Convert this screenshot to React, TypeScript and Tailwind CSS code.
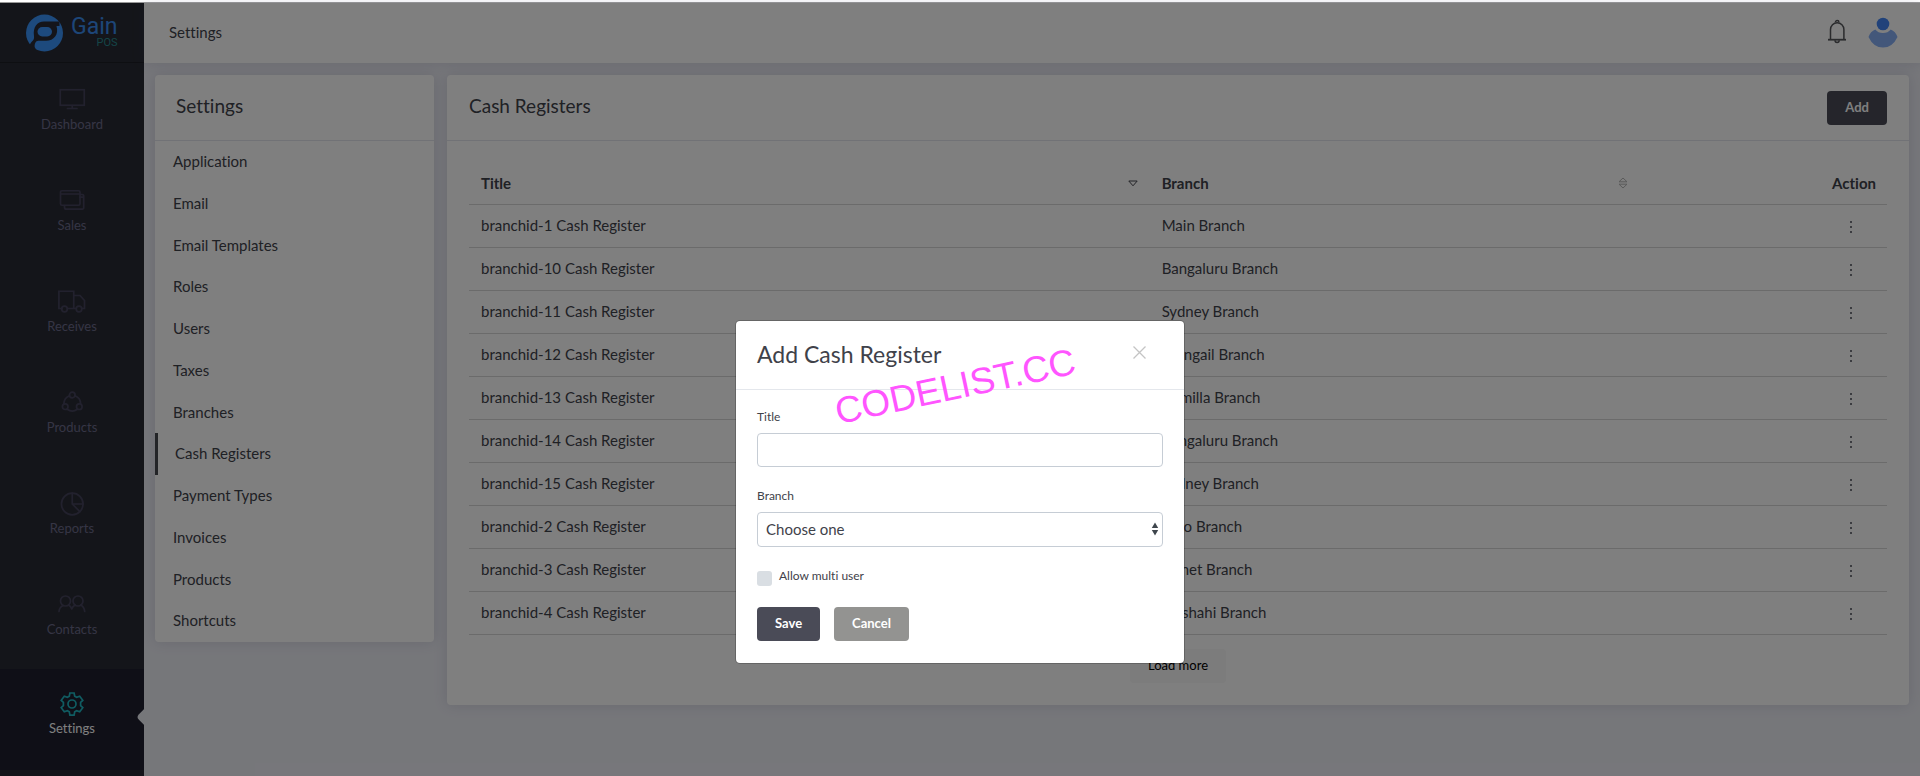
import type { ReactNode } from "react";

const stroke = {
  fill: "none",
  stroke: "currentColor",
  strokeWidth: 1.7,
  strokeLinecap: "round" as const,
  strokeLinejoin: "round" as const,
};

function DashboardIcon() {
  return (
    <svg viewBox="0 0 28 24" className="h-6 w-7" {...stroke} strokeLinejoin="miter" aria-hidden="true">
      <rect x="2.25" y="1.75" width="24" height="15.5" />
      <path d="M14.25 17.5v3M9.5 20.5h9.5" />
    </svg>
  );
}

function SalesIcon() {
  return (
    <svg viewBox="0 0 28 24" className="h-6 w-7" {...stroke} aria-hidden="true">
      <rect x="2.5" y="1.75" width="19.5" height="14.5" rx="1.5" />
      <path d="M3 5h18.5M22 5.5h2.2a1.5 1.5 0 0 1 1.5 1.5v11.7a1.5 1.5 0 0 1-1.5 1.5H8.5a2 2 0 0 1-2-2v-1.5M22 8.2h3.5" />
    </svg>
  );
}

function ReceivesIcon() {
  return (
    <svg viewBox="0 0 28 24" className="h-6 w-7" {...stroke} strokeLinejoin="miter" aria-hidden="true">
      <path d="M4 18.5H.9V1.25h14.85v17.25M9.5 18.5h8.5M16 5.5h6l4.5 5v8h-2.5" />
      <circle cx="6.5" cy="19" r="2.8" />
      <circle cx="21" cy="19" r="2.8" />
    </svg>
  );
}

function ProductsIcon() {
  return (
    <svg viewBox="0 0 28 24" className="h-6 w-7" {...stroke} aria-hidden="true">
      <circle cx="14.25" cy="4" r="2.8" />
      <circle cx="7.2" cy="15.7" r="2.8" />
      <circle cx="21.3" cy="15.7" r="2.8" />
      <path d="M11.5 4.8a8.800 8.800 0 0 0-5.600 8M17 4.8a8.800 8.800 0 0 1 5.600 8M9.200 18.200a8.500 8.500 0 0 0 10.100 0" />
    </svg>
  );
}

function ReportsIcon() {
  return (
    <svg viewBox="0 0 28 24" className="h-6 w-7" {...stroke} aria-hidden="true">
      <circle cx="14.25" cy="12" r="10.8" />
      <path d="M14.25 1.2V12h10.800M14.25 12l7.600 7.600" />
    </svg>
  );
}

function ContactsIcon() {
  return (
    <svg viewBox="0 0 28 24" className="h-6 w-7" {...stroke} aria-hidden="true">
      <circle cx="7.5" cy="8" r="5" />
      <circle cx="20" cy="8" r="5" />
      <path d="M1 18.500c.3-3 2-5 4-6M10.500 12c1.500.8 2.700 2.200 3.300 4 .6-1.800 1.800-3.200 3.300-4M22.800 12c2 1 3.500 3.200 3.900 6.500" />
    </svg>
  );
}

function SettingsIcon() {
  return (
    <svg viewBox="0 0 24 24" className="h-6 w-7" {...stroke} strokeLinejoin="miter" aria-hidden="true">
      <path d="M9.900 1h4.200l.6 3.200 1.900 1.100 3.100-1.100 3.100 4.100-2.200 2.100v3.200l2.200 2.100-3.100 4.100-3.100-1.100-1.900 1.100-.6 3.300H9.900l-.6-3.300-1.900-1.100-3.100 1.100-3.100-4.100 2.200-2.100v-3.200L1.200 8.300l3.100-4.100 3.100 1.100 1.900-1.100z" />
      <circle cx="12" cy="12" r="4" />
    </svg>
  );
}

function Logo() {
  return (
    <svg viewBox="0 0 37 38" className="h-[38px] w-[37px]" aria-hidden="true">
      <circle cx="18.500" cy="19" r="18.500" fill="#3a94fb" />
      <path
        d="M3.500 31.500C5.500 26 8.500 27.500 8 22 6.800 13 11 7.500 18 7.500H33.500V12h-3c2.500 8.500-2.500 14.800-10.500 14.800h-6.500c-3.500 0-4.200 1.500-4.800 4.200-.3 1.600.2 3 1.300 4.300L7.500 36z"
        fill="#292b34"
      />
      <rect x="11.500" y="13" width="14.500" height="9.500" rx="4.750" fill="#3a94fb" />
    </svg>
  );
}

function SortIcon() {
  return (
    <svg viewBox="0 0 10 12" className="h-3 w-[10px] text-[#b5b5b5]" fill="none" stroke="currentColor" aria-hidden="true">
      <path d="M1 4.800h8L5 1zM1 7.200h8L5 11z" />
    </svg>
  );
}

function SortDownIcon() {
  return (
    <svg viewBox="0 0 10 12" className="h-3 w-[10px] text-[#44464e]" fill="none" stroke="currentColor" aria-hidden="true">
      <path d="M.8 4h8.400L5 8.800z" />
    </svg>
  );
}

const navItems: { label: string; icon: ReactNode; active?: boolean }[] = [
  { label: "Dashboard", icon: <DashboardIcon /> },
  { label: "Sales", icon: <SalesIcon /> },
  { label: "Receives", icon: <ReceivesIcon /> },
  { label: "Products", icon: <ProductsIcon /> },
  { label: "Reports", icon: <ReportsIcon /> },
  { label: "Contacts", icon: <ContactsIcon /> },
  { label: "Settings", icon: <SettingsIcon />, active: true },
];

const settingsItems = [
  "Application",
  "Email",
  "Email Templates",
  "Roles",
  "Users",
  "Taxes",
  "Branches",
  "Cash Registers",
  "Payment Types",
  "Invoices",
  "Products",
  "Shortcuts",
];

const registers = [
  ["branchid-1 Cash Register", "Main Branch"],
  ["branchid-10 Cash Register", "Bangaluru Branch"],
  ["branchid-11 Cash Register", "Sydney Branch"],
  ["branchid-12 Cash Register", "Mungail Branch"],
  ["branchid-13 Cash Register", "Cumilla Branch"],
  ["branchid-14 Cash Register", "Bangaluru Branch"],
  ["branchid-15 Cash Register", "Sydney Branch"],
  ["branchid-2 Cash Register", "Oslo Branch"],
  ["branchid-3 Cash Register", "Sylhet Branch"],
  ["branchid-4 Cash Register", "Rajshahi Branch"],
];

function Sidebar() {
  return (
    <aside className="w-36 shrink-0 bg-[#292b34]">
      <a href="#home" className="flex h-[60px] items-center gap-2 border-b border-[#1d1e25] pl-[26px]">
        <Logo />
        <span className="flex flex-col items-end font-[Roboto,sans-serif]">
          <span className="text-[23px] leading-5 text-[#3a8df0]">Gain</span>
          <span className="text-[11px] leading-3 text-[#2a8a90]">POS</span>
        </span>
      </a>
      <nav>
        {navItems.map((item) => (
          <a
            key={item.label}
            href={"#" + item.label.toLowerCase()}
            className={
              item.active
                ? "relative flex h-[101px] flex-col items-center gap-1 overflow-hidden bg-[#1e1e2f] pt-[23px] text-[#20b9c4]"
                : "flex h-[101px] flex-col items-center gap-1 pt-[25px] text-[#45435c]"
            }
          >
            {item.icon}
            <span className={item.active ? "text-[13px] leading-4 text-white" : "text-[13px] leading-4 text-[#6c6a8b]"}>
              {item.label}
            </span>
            {item.active && (
              <span className="absolute top-[41px] -right-[9px] size-[14px] rotate-45 rounded-[4px] bg-[#edeef5]" />
            )}
          </a>
        ))}
      </nav>
    </aside>
  );
}

function TopBar() {
  return (
    <header className="flex h-[60px] items-center justify-between bg-white pr-[22px] pb-[2px] pl-[25px] shadow-[0_0_12px_rgba(70,70,110,0.16)]">
      <h1 className="text-[15px]">Settings</h1>
      <div className="flex items-center gap-[21px]">
        <button type="button" aria-label="Notifications" className="text-[#55565a]">
          <svg viewBox="0 0 20 26" className="h-[26px] w-5" fill="none" stroke="currentColor" strokeWidth="1.500">
            <path d="M3.500 20.500V10.500a6.700 6.700 0 0 1 13.400 0v10" />
            <path d="M1 20.700h18" strokeWidth="1.800" />
            <path d="M8.500 3.200a1.700 1.700 0 0 1 3.400 0M8 21.300a2.100 2.100 0 0 0 4.200 0" />
          </svg>
        </button>
        <button type="button" aria-label="Account">
          <svg viewBox="0 0 30 32" className="h-8 w-[30px]">
            <circle cx="15" cy="8" r="6.300" fill="#4285f4" />
            <path d="M7.300 13.500q2.800 3.600 7.700 3.600t7.700-3.600c3.200 1.200 5.600 4 6.800 7.400Q24.500 31.500 15 31.500T.5 20.900C1.700 17.500 4.100 14.700 7.300 13.500z" fill="#87aff5" />
          </svg>
        </button>
      </div>
    </header>
  );
}

function SettingsMenu() {
  return (
    <section className="w-[279px] shrink-0 rounded bg-white shadow-[0_0_14px_rgba(70,70,110,0.16)]">
      <h2 className="flex h-[66px] items-center border-b border-[#e2e4ec] px-[21px] pb-[2px] text-[19px]">Settings</h2>
      <ul className="grid h-[501px] auto-rows-fr">
        {settingsItems.map((item) => (
          <li key={item} className="grid">
            <a
              href={"#" + item.toLowerCase().replace(" ", "-")}
              className={
                item === "Cash Registers"
                  ? "flex items-center border-l-[3px] border-[#46484f] pb-px pl-[17px] text-[15px]"
                  : "flex items-center pb-px pl-[18px] text-[15px]"
              }
            >
              {item}
            </a>
          </li>
        ))}
      </ul>
    </section>
  );
}

function RegistersPanel() {
  return (
    <section className="min-w-0 flex-1 rounded bg-white shadow-[0_0_14px_rgba(70,70,110,0.16)]">
      <div className="flex h-[66px] items-center justify-between border-b border-[#e2e4ec] px-[22px]">
        <h2 className="pb-[2px] text-[19px]">Cash Registers</h2>
        <button type="button" className="h-[34px] rounded bg-[#4a4b57] px-[18px] text-[13px] font-bold text-white">
          Add
        </button>
      </div>
      <div className="px-[22px] pt-5 pb-[22px]">
        <table className="w-full table-fixed border-collapse text-[15px]">
          <thead>
            <tr className="h-[43px] border-b border-[#d6d6d6]">
              <th className="w-[48%] pt-[2px] pr-3 pl-3 text-left font-bold">
                <span className="flex items-center justify-between">
                  Title <SortDownIcon />
                </span>
              </th>
              <th className="w-[35%] pt-[2px] pr-[18px] pl-3 text-left font-bold">
                <span className="flex items-center justify-between">
                  Branch <SortIcon />
                </span>
              </th>
              <th className="pt-[2px] pr-[11px] text-right font-bold">Action</th>
            </tr>
          </thead>
          <tbody>
            {registers.map(([title, branch]) => (
              <tr key={title} className="h-[43px] border-b border-[#d6d6d6]">
                <td className="pl-3">{title}</td>
                <td className="pl-3">{branch}</td>
                <td className="pt-[2px] pr-[30px]">
                  <button type="button" aria-label="Row actions" className="ml-auto flex h-5 w-3 flex-col items-center justify-center gap-[3px]">
                    <span className="size-[2px] rounded-full bg-[#4a4b57]" />
                    <span className="size-[2px] rounded-full bg-[#4a4b57]" />
                    <span className="size-[2px] rounded-full bg-[#4a4b57]" />
                  </button>
                </td>
              </tr>
            ))}
          </tbody>
        </table>
        <div className="mt-[14px] flex justify-center">
          <button type="button" className="h-[34px] rounded bg-[#f8f8f8] px-[18px] text-[13px] text-black">
            Load more
          </button>
        </div>
      </div>
    </section>
  );
}

function AddRegisterDialog() {
  return (
    <div
      role="dialog"
      aria-labelledby="dialog-title"
      className="relative w-[448px] rounded bg-white shadow-[0_0_0_1px_rgba(0,0,0,0.2)]"
    >
      <div className="flex h-[69px] items-center justify-between border-b border-[#e4e7ec] pr-[38px] pb-[2px] pl-[21px]">
        <h2 id="dialog-title" className="text-[23px]">
          Add Cash Register
        </h2>
        <button type="button" aria-label="Close" className="mb-1 text-[#c4c4c4]">
          <svg viewBox="0 0 13 13" className="size-[13px]" fill="none" stroke="currentColor" strokeWidth="1.300">
            <path d="M.5.5l12 12M12.500.5l-12 12" />
          </svg>
        </button>
      </div>
      <form className="px-[21px] pt-[17px] pb-[22px]" onSubmit={(e) => e.preventDefault()}>
        <label htmlFor="title" className="block text-xs leading-5">
          Title
        </label>
        <input id="title" type="text" className="mt-[6px] block h-[34px] w-full rounded border border-[#c6cdd5] px-2 text-[15px]" />
        <label htmlFor="branch" className="mt-[19px] block text-xs leading-5">
          Branch
        </label>
        <div className="relative mt-[6px]">
          <select id="branch" className="block h-[35px] w-full appearance-none rounded border border-[#c6cdd5] bg-white px-2 text-[15px]">
            <option>Choose one</option>
          </select>
          <svg viewBox="0 0 8 14" className="pointer-events-none absolute top-[10px] right-1 h-[14px] w-2" fill="#3f464d" aria-hidden="true">
            <path d="M4 .5L7.200 6H.8zM4 13.500L7.200 8H.8z" />
          </svg>
        </div>
        <div className="mt-[19px] flex h-5 gap-[7px]">
          <input id="multi" type="checkbox" className="mt-[5px] size-[15px] appearance-none rounded-[3px] bg-[#d9dee3]" />
          <label htmlFor="multi" className="text-xs leading-5">
            Allow multi user
          </label>
        </div>
        <div className="mt-[21px] flex gap-[14px]">
          <button type="submit" className="h-[34px] rounded bg-[#4a4b57] px-[18px] text-[13px] font-bold text-white">
            Save
          </button>
          <button type="button" className="h-[34px] rounded bg-[#939391] px-[18px] text-[13px] font-bold text-white">
            Cancel
          </button>
        </div>
      </form>
      <span className="pointer-events-none absolute top-[41px] left-[97px] -rotate-12 font-['Liberation_Sans',sans-serif] text-[37px] leading-[50px] text-[#ff55ff]">
        CODELIST.CC
      </span>
    </div>
  );
}

export default function App() {
  return (
    <div className="relative flex min-h-screen flex-col bg-white pt-[2px] font-[Lato,sans-serif] text-[#3f424a] [font-variant-ligatures:none]">
      <div className="flex flex-1 border-t border-[#999]">
        <Sidebar />
        <div className="min-w-0 flex-1 bg-[#edeef5]">
          <TopBar />
          <main className="flex items-start gap-[13px] pt-3 pr-[11px] pb-4 pl-[11px]">
            <SettingsMenu />
            <RegistersPanel />
          </main>
        </div>
      </div>
      <div className="absolute inset-x-0 top-[3px] bottom-0 flex items-start justify-center bg-black/50 pt-[318px]">
        <AddRegisterDialog />
      </div>
    </div>
  );
}
